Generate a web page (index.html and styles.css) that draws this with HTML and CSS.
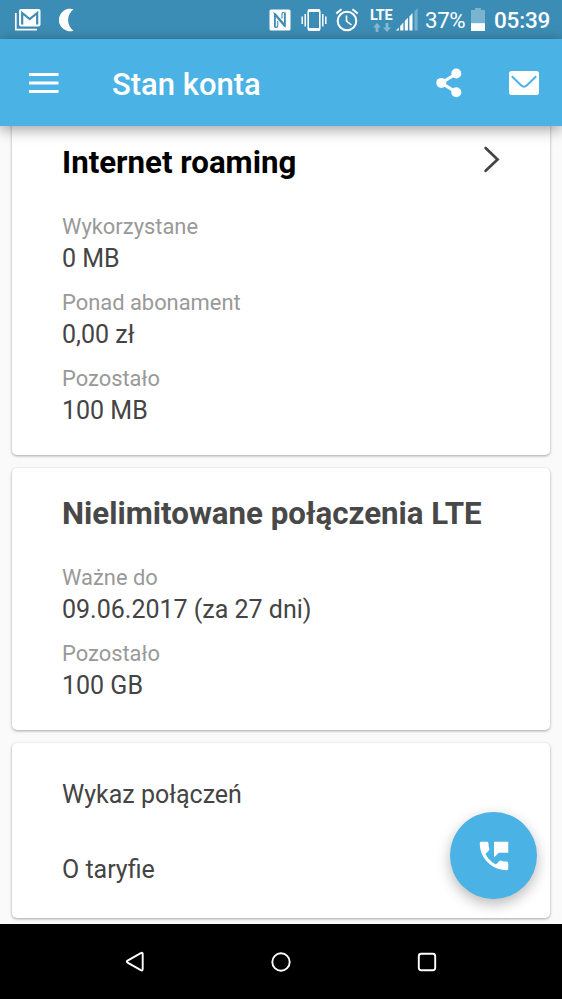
FILE: index.html
```html
<!DOCTYPE html>
<html lang="pl">
<head>
<meta charset="utf-8">
<title>Stan konta</title>
<link rel="stylesheet" href="styles.css">
</head>
<body>
<div class="screen">
  <header class="status">
    <svg class="gmail" width="28" height="24" viewBox="0 0 28 24"><path d="M1.800 5v16.700H23" fill="none" stroke="#fff" stroke-width="1.700" stroke-linejoin="round"/><rect x="5" y="1" width="21.500" height="17.500" rx="2" fill="#fff"/><path d="M8.200 16.500V5l7.500 6 7.500-6v11.500" fill="none" stroke="#3c8db5" stroke-width="2.200"/></svg>
    <svg class="moon" width="15" height="24" viewBox="0 0 15 24"><path d="M14.500 1.200A11.300 11.300 0 1 0 14.500 22.800A13.500 13.500 0 0 1 14.500 1.200Z" fill="#fff"/></svg>
    <svg class="nfc" width="22" height="22" viewBox="0 0 22 22"><rect x=".5" y=".5" width="21" height="21" rx="1.500" fill="#fff"/><path d="M3.800 3.200C5.500 3.400 6.500 4 7.500 5.200L15 14V3.500h1.800V18.500C15.800 18.300 15 17.800 14 16.600L6.800 8v10.500H5V4.800Z" fill="#3c8db5"/><path d="M8.800 12v4.500q0 2-2.500 2M13 9.500V5q0-1.800 2.500-1.800" fill="none" stroke="#3c8db5" stroke-width="1.100"/></svg>
    <svg class="vibrate" width="26" height="24" viewBox="0 0 26 24"><rect x="7.200" y="2" width="11.600" height="20" rx="1.500" fill="none" stroke="#fff" stroke-width="1.600"/><path d="M7.200 2.600h11.600M7.200 21.400h11.600" stroke="#fff" stroke-width="2.600"/><path d="M4.200 6v12.500M1.200 8.500v7.500M21.800 6v12.500M24.800 8.500v7.500" stroke="#fff" stroke-width="1.500"/></svg>
    <svg class="alarm" width="24" height="24" viewBox="0 0 24 24" fill="none" stroke="#fff"><circle cx="12" cy="13" r="9.300" stroke-width="2"/><path d="M11.500 7.500V13l5 4" stroke-width="1.600"/><path d="M1.300 5.500 6.500 1.200M22.700 5.500 17.500 1.200" stroke-width="2"/></svg>
    <div class="lte"><span>LTE</span><svg width="18" height="10" viewBox="0 0 18 10" fill="#84bad5"><path d="M4 0 8 4.500H5.400V9H2.600V4.500H0ZM14 9 18 4.500H15.400V0H12.600V4.500H10Z"/></svg></div>
    <svg class="signal" width="23" height="24" viewBox="0 0 23 24"><path d="M0 23.500 2.800 20.400v3.100ZM4.200 23.500v-4.500l3.200-3.500v8ZM8.800 23.500V14l3.100-3.300v12.800ZM13.400 23.500V9.500L16.500 6v17.500Z" fill="#fff"/><path d="M18.500 23.500V4.500L21.600 1v22.500Z" fill="#75b0ce"/></svg>
    <span class="percent">37%</span>
    <svg class="battery" width="14" height="23" viewBox="0 0 14 23"><path d="M0 2h4V0h6v2h4v21H0Z" fill="#78b3d0"/><path d="M0 15.200h14V23H0Z" fill="#fff"/></svg>
    <span class="clock">05:39</span>
  </header>

  <nav class="appbar">
    <svg class="menu" width="30" height="20" viewBox="0 0 30 20"><path d="M0 1.600h29.500M0 10h29.500M0 18.400h29.500" stroke="#fff" stroke-width="3"/></svg>
    <h1>Stan konta</h1>
    <svg class="share" width="26" height="30" viewBox="0 0 26 30"><path d="M20.500 5.500 5.500 15l15 9.300" fill="none" stroke="#fff" stroke-width="3.200"/><g fill="#fff"><circle cx="20.300" cy="5.500" r="5"/><circle cx="5.300" cy="14.900" r="5"/><circle cx="20.300" cy="24.200" r="5"/></g></svg>
    <svg class="mail" width="30" height="24" viewBox="0 0 30 24"><rect width="30" height="24" rx="2.500" fill="#fff"/><path d="m2.800 5.300 9.200 9q3 2.900 6 0l9.200-9" fill="none" stroke="#4ab2e5" stroke-width="1.900"/></svg>
  </nav>

  <main class="content">
    <section class="card first">
      <div class="heading"><h2>Internet roaming</h2><svg width="17" height="27" viewBox="0 0 17 27"><path d="m2.600 2 12 11.400-12 11.400" fill="none" stroke="#444" stroke-width="2.700" stroke-linecap="round"/></svg></div>
      <dl>
        <div><dt>Wykorzystane</dt><dd>0 MB</dd></div>
        <div><dt>Ponad abonament</dt><dd>0,00 zł</dd></div>
        <div><dt>Pozostało</dt><dd>100 MB</dd></div>
      </dl>
    </section>
    <section class="card">
      <div class="heading"><h2>Nielimitowane połączenia LTE</h2></div>
      <dl>
        <div><dt>Ważne do</dt><dd>09.06.2017 (za 27 dni)</dd></div>
        <div><dt>Pozostało</dt><dd>100 GB</dd></div>
      </dl>
    </section>
    <section class="card links">
      <a>Wykaz połączeń</a>
      <a>O taryfie</a>
    </section>
    <button class="fab" aria-label="Kontakt"><svg width="38" height="38" viewBox="0 0 24 24" fill="#fff"><path d="M20 15.500c-1.250 0-2.450-.2-3.570-.57-.35-.11-.74-.03-1.020.24l-2.200 2.200c-2.830-1.440-5.150-3.750-6.590-6.580l2.200-2.210c.28-.27.36-.66.25-1.010C8.700 6.450 8.500 5.250 8.500 4c0-.55-.45-1-1-1H4c-.55 0-1 .45-1 1 0 9.390 7.610 17 17 17 .55 0 1-.45 1-1v-3.500c0-.55-.45-1-1-1zM12 3v10l3-3h6V3h-9z"/></svg></button>
  </main>

  <footer class="navbar">
    <svg width="20" height="22" viewBox="0 0 20 22"><path d="M15.800 2.100 2.600 9.600q-1.600 1 0 2l13.200 7.500q1.900 1 1.900-1V3.100q0-2-1.900-1Z"/></svg>
    <svg width="20" height="20" viewBox="0 0 20 20"><circle cx="10" cy="10" r="8.700"/></svg>
    <svg width="20" height="20" viewBox="0 0 20 20"><rect x="1.800" y="1.800" width="16.400" height="16.400" rx="2.500"/></svg>
  </footer>
</div>
</body>
</html>
```

FILE: styles.css
```css
* { box-sizing: border-box; }
body, h1, h2, dl, dd { margin: 0; }
body { font-family: Roboto, sans-serif; }
svg { display: block; flex: none; }

.screen {
  display: flex;
  flex-direction: column;
  width: 562px;
  height: 999px;
  overflow: hidden;
  background: #fafafa;
}

.status {
  display: flex;
  align-items: center;
  flex: none;
  height: 39px;
  padding-left: 14px;
  background: #3c8db5;
  color: #fff;
  white-space: nowrap;
}
.moon { margin-left: 17px; }
.nfc { margin-left: 195px; }
.vibrate { margin-left: 10px; }
.alarm { margin-left: 8px; }
.lte { width: 22px; margin: 2px 0 0 11px; }
.lte span { display: block; height: 13px; font-size: 14.500px; font-weight: 700; line-height: 14px; letter-spacing: -.4px; }
.lte svg { margin: 1px 0 0 3px; }
.signal { margin: -1px 0 0 4px; }
.percent { width: 41px; margin-left: 6px; font-size: 22.300px; letter-spacing: -.4px; }
.battery { margin-left: 5px; }
.clock { margin-left: 9px; font-size: 22.500px; font-weight: 500; letter-spacing: -.2px; }

.appbar {
  position: relative;
  z-index: 2;
  display: flex;
  align-items: center;
  flex: none;
  height: 87px;
  padding: 0 23px 0 29px;
  background: #4ab2e5;
  box-shadow: 0 3px 14px rgba(0, 0, 0, .4);
  color: #fff;
}
.appbar h1 { flex: 1; margin: 4px 0 0 53px; font-size: 31px; font-weight: 500; line-height: 36px; }
.mail { margin: 1px 0 0 47px; }

.content {
  position: relative;
  display: flex;
  flex-direction: column;
  gap: 13px;
  flex: none;
  height: 798px;
  padding: 0 12px;
}
.card {
  flex: none;
  padding: 28px 50px 28px;
  border-radius: 5px;
  background: #fff;
  box-shadow: 0 1px 3px rgba(0, 0, 0, .35);
}
.card.first { margin-top: -10px; padding-top: 29px; }
.heading { display: flex; justify-content: space-between; height: 36px; margin-bottom: 30px; color: #484848; }
.heading svg { margin-top: 1px; }
.first .heading { color: #000; }
h2 { font-size: 31.250px; font-weight: 700; line-height: 36px; white-space: nowrap; }
dl { display: grid; gap: 12px; }
dt, dd { line-height: 32px; }
dt { color: #999; font-size: 21.900px; }
dd { color: #444; font-size: 25px; }
.links { padding: 14px 50px 11px; }
.links a { display: block; height: 75px; color: #444; font-size: 25px; line-height: 75px; }

.fab {
  position: absolute;
  right: 25px;
  bottom: 25px;
  display: grid;
  place-items: center;
  width: 87px;
  height: 87px;
  padding: 0;
  border: 0;
  border-radius: 50%;
  background: #4ab2e5;
  box-shadow: 0 5px 14px rgba(0, 0, 0, .28);
}

.navbar {
  position: relative;
  display: flex;
  align-items: center;
  justify-content: center;
  gap: 126px;
  flex: 1;
  background: #000;
}
.navbar svg { fill: none; stroke: #fff; stroke-width: 1.900; }
```
